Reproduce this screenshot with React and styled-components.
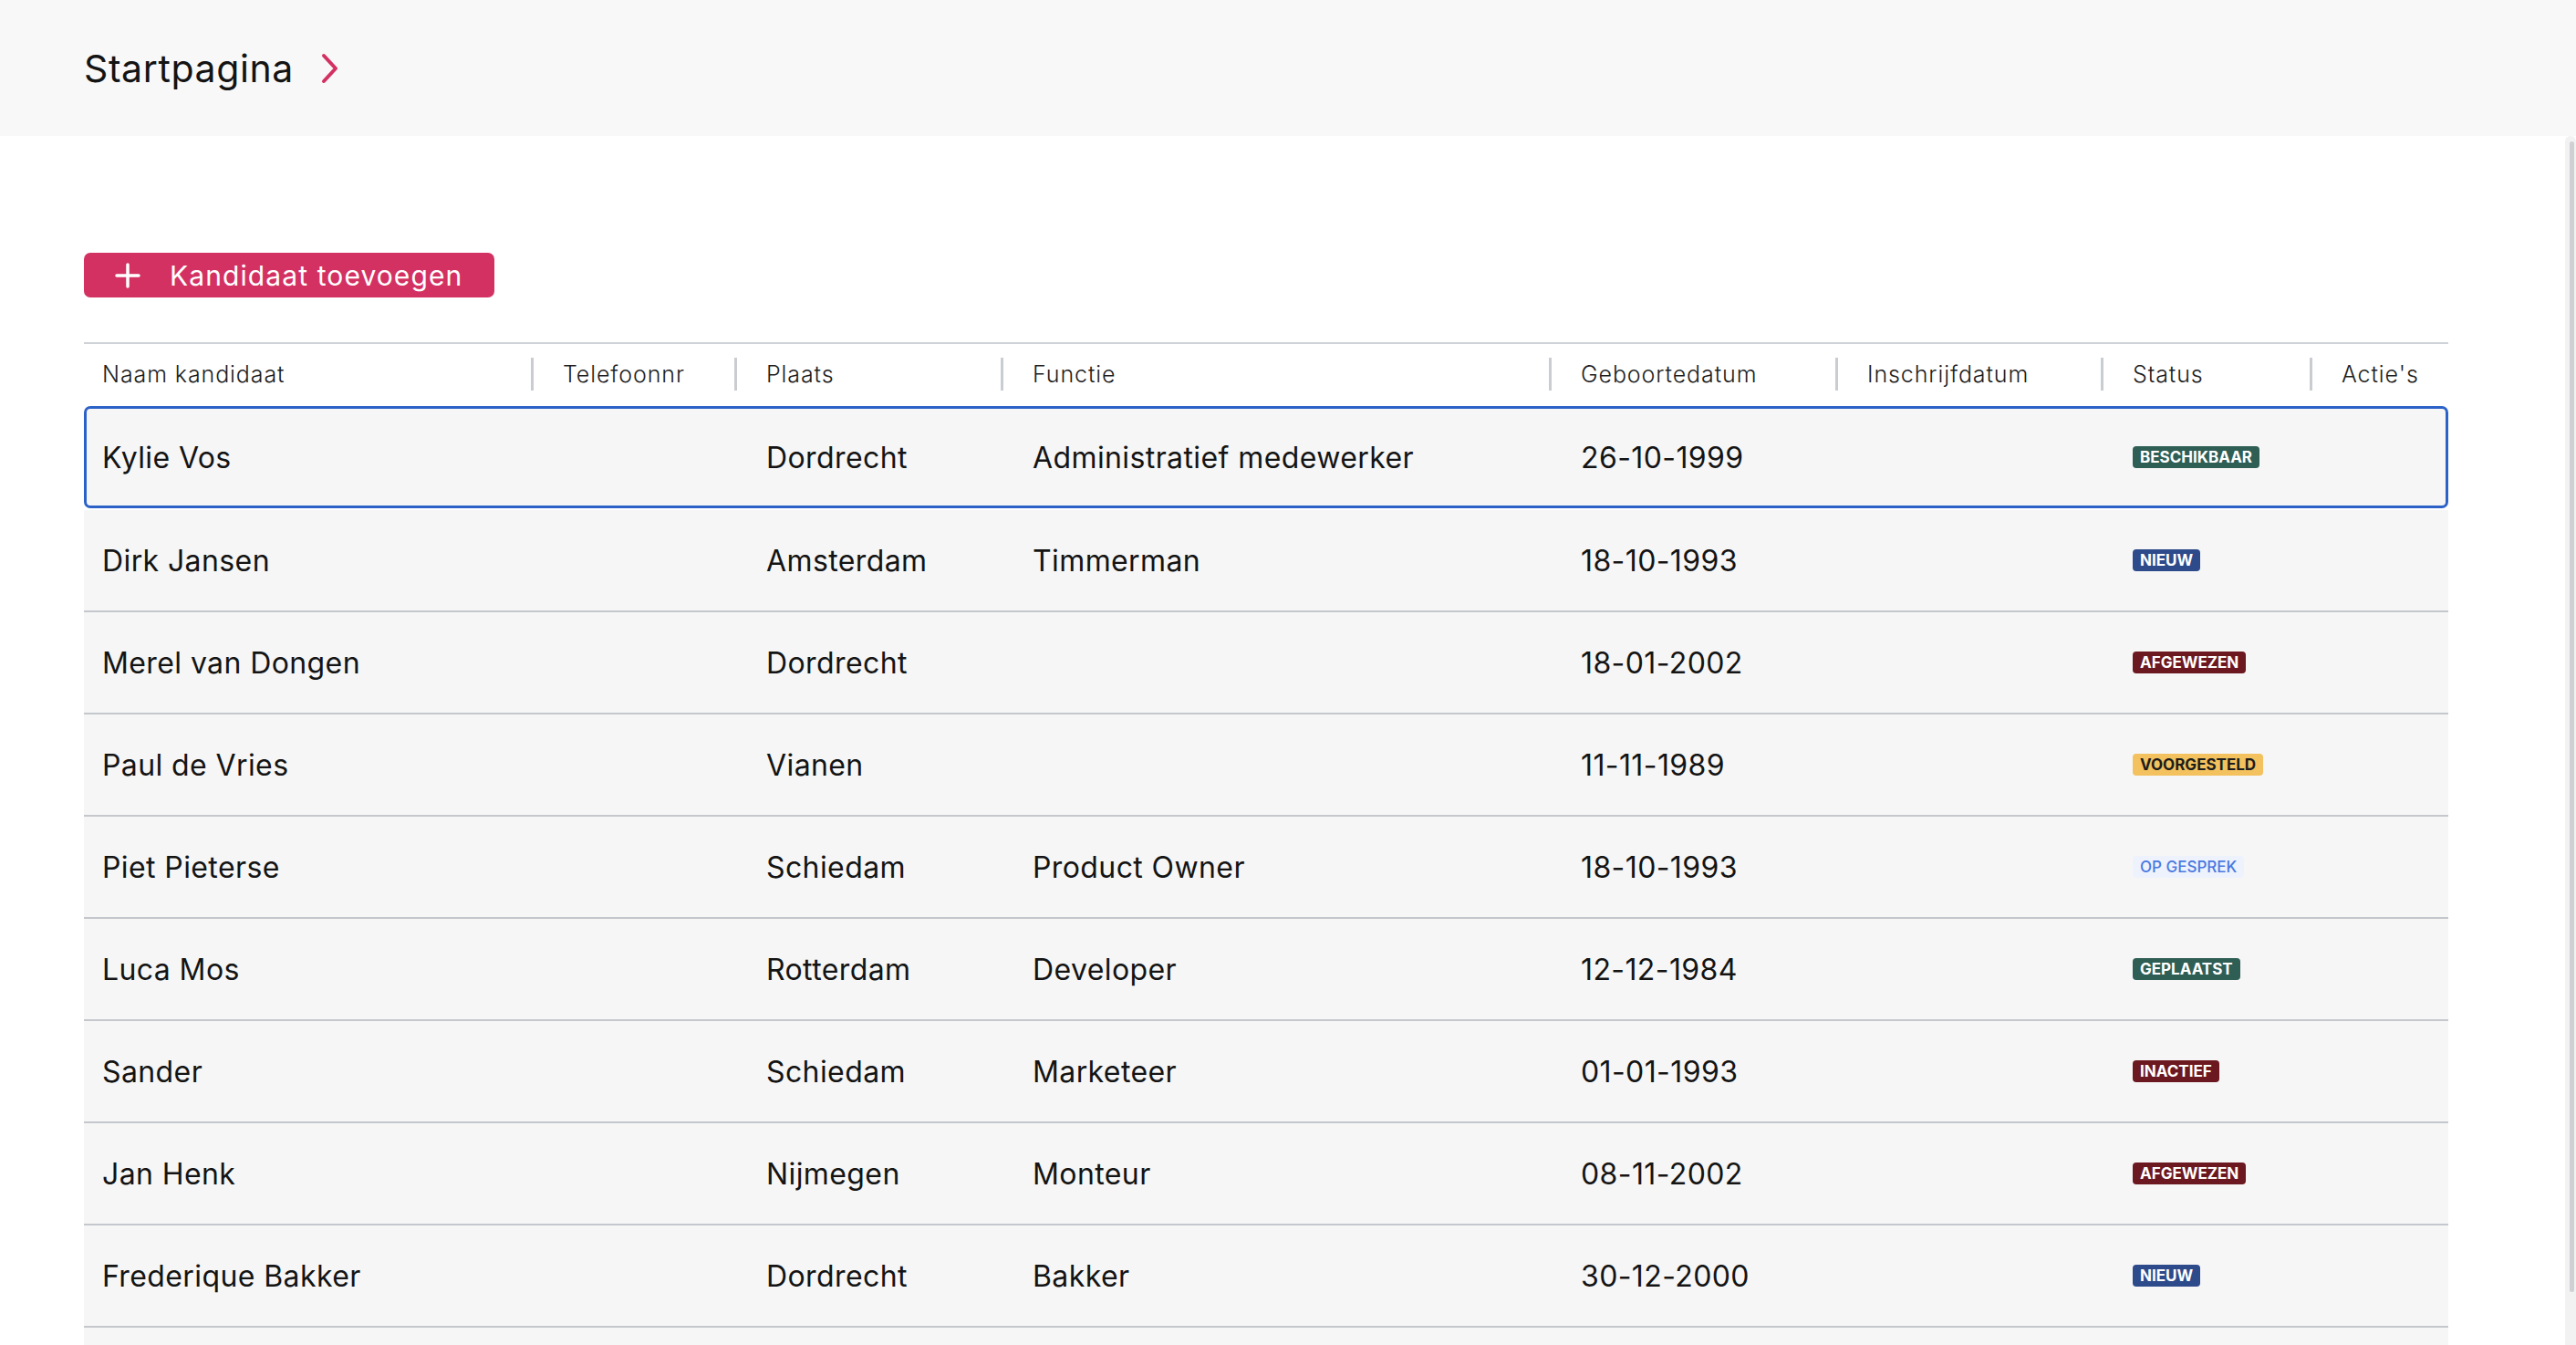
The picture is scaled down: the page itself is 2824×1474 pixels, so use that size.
import React from 'react';
import styled, { createGlobalStyle } from 'styled-components';

const GlobalStyle = createGlobalStyle`
  html, body, #root {
    height: 100%;
  }
  body {
    margin: 0;
    font-family: Inter, 'Noto Sans', sans-serif;
    color: #141414;
    background: #ffffff;
  }
  * {
    box-sizing: border-box;
  }
`;

const Page = styled.div`
  display: flex;
  flex-direction: column;
  height: 100vh;
  overflow: hidden;
`;

const TopBar = styled.header`
  flex: 0 0 149px;
  background: #f8f8f8;
  display: flex;
  align-items: center;
  gap: 30px;
  padding-left: 92px;
`;

const Title = styled.h1`
  margin: 0;
  font-size: 41px;
  font-weight: 400;
  letter-spacing: 0.6px;
  color: #141414;
`;

const Body = styled.div`
  flex: 1;
  min-height: 0;
  display: flex;
`;

const Main = styled.main`
  flex: 1;
  overflow: hidden;
  padding: 128px 128px 0 92px;
`;

const ScrollTrack = styled.div`
  flex: 0 0 12px;
  background: #f2f2f2;
  border-radius: 6px 6px 0 0;
  padding: 6px 2px 0 5px;
`;

const ScrollThumb = styled.div`
  height: 1261px;
  background: #cfd0d4;
  border-radius: 3px;
`;

const AddButton = styled.button`
  display: flex;
  align-items: center;
  gap: 32px;
  height: 49px;
  width: 450px;
  padding: 0 0 0 34px;
  border: none;
  border-radius: 7px;
  background: #d33162;
  color: #ffffff;
  font-family: inherit;
  font-size: 30px;
  font-weight: 400;
  letter-spacing: 1.1px;
  cursor: pointer;
`;

const Table = styled.div`
  margin-top: 49px;
  border-top: 2px solid #cfd2d6;
`;

const cols = '490px 223px 292px 601px 314px 291px 229px 1fr';

const HeaderRow = styled.div`
  display: grid;
  grid-template-columns: ${cols};
  align-items: center;
  height: 68px;
  padding-bottom: 2px;
`;

const HeadCell = styled.div`
  height: 36px;
  line-height: 36px;
  font-size: 25px;
  font-weight: 300;
  letter-spacing: 0.9px;
  color: #1e1e1e;
  padding-left: ${p => (p.$first ? '20px' : '32px')};
  border-left: ${p => (p.$first ? 'none' : '3px solid #c9ccd0')};
  white-space: nowrap;
`;

const Row = styled.div`
  display: grid;
  grid-template-columns: ${cols};
  align-items: center;
  height: 112px;
  background: #f6f6f6;
  border-bottom: ${p => (p.$selected ? 'none' : '2px solid #c4c7cc')};
  box-shadow: ${p => (p.$selected ? 'inset 0 0 0 3px #2c62c8' : 'none')};
  border-radius: ${p => (p.$selected ? '7px' : '0')};
  margin-bottom: ${p => (p.$selected ? '2px' : '0')};
`;

const Cell = styled.div`
  display: flex;
  align-items: center;
  font-size: 32px;
  font-weight: 400;
  letter-spacing: 0.4px;
  color: #141414;
  padding-left: ${p => (p.$first ? '20px' : '35px')};
  white-space: nowrap;
`;

const Badge = styled.span`
  display: inline-flex;
  align-items: center;
  height: 24px;
  padding: 0 8px;
  border-radius: 4px;
  font-size: 17px;
  font-weight: ${p => (p.$light ? 500 : 700)};
  letter-spacing: 0;
  text-transform: uppercase;
  background: ${p => p.$bg};
  color: ${p => p.$fg};
`;

const statusStyles = {
  beschikbaar: { bg: '#2f5e55', fg: '#ffffff' },
  nieuw: { bg: '#2d4a8b', fg: '#ffffff' },
  afgewezen: { bg: '#6c1820', fg: '#ffffff' },
  voorgesteld: { bg: '#f3c15d', fg: '#1c1c1c' },
  'op gesprek': { bg: '#edf2fd', fg: '#4a79e0', light: true },
  geplaatst: { bg: '#2f5e55', fg: '#ffffff' },
  inactief: { bg: '#6c1820', fg: '#ffffff' },
};

const headers = ['Naam kandidaat', 'Telefoonnr', 'Plaats', 'Functie', 'Geboortedatum', 'Inschrijfdatum', 'Status', "Actie's"];

const candidates = [
  { name: 'Kylie Vos', city: 'Dordrecht', role: 'Administratief medewerker', born: '26-10-1999', status: 'beschikbaar' },
  { name: 'Dirk Jansen', city: 'Amsterdam', role: 'Timmerman', born: '18-10-1993', status: 'nieuw' },
  { name: 'Merel van Dongen', city: 'Dordrecht', role: '', born: '18-01-2002', status: 'afgewezen' },
  { name: 'Paul de Vries', city: 'Vianen', role: '', born: '11-11-1989', status: 'voorgesteld' },
  { name: 'Piet Pieterse', city: 'Schiedam', role: 'Product Owner', born: '18-10-1993', status: 'op gesprek' },
  { name: 'Luca Mos', city: 'Rotterdam', role: 'Developer', born: '12-12-1984', status: 'geplaatst' },
  { name: 'Sander', city: 'Schiedam', role: 'Marketeer', born: '01-01-1993', status: 'inactief' },
  { name: 'Jan Henk', city: 'Nijmegen', role: 'Monteur', born: '08-11-2002', status: 'afgewezen' },
  { name: 'Frederique Bakker', city: 'Dordrecht', role: 'Bakker', born: '30-12-2000', status: 'nieuw' },
];

const Chevron = () => (
  <svg width="20" height="34" viewBox="0 0 20 34" fill="none">
    <path d="M3 3 L16 17 L3 31" stroke="#d33162" strokeWidth="4" strokeLinecap="round" strokeLinejoin="round" />
  </svg>
);

const PlusIcon = () => (
  <svg width="28" height="28" viewBox="0 0 28 28" fill="none">
    <path d="M14 2 V26 M2 14 H26" stroke="#ffffff" strokeWidth="3.5" strokeLinecap="round" />
  </svg>
);

const App = () => {
  return (
    <Page>
      <GlobalStyle />
      <TopBar>
        <Title>Startpagina</Title>
        <Chevron />
      </TopBar>
      <Body>
        <Main>
          <AddButton>
            <PlusIcon />
            Kandidaat toevoegen
          </AddButton>
          <Table>
            <HeaderRow>
              {headers.map((h, i) => (
                <HeadCell key={h} $first={i === 0}>{h}</HeadCell>
              ))}
            </HeaderRow>
            {candidates.map((c, i) => {
              const s = statusStyles[c.status];
              const selected = i === 0;
              return (
                <Row key={c.name} $selected={selected}>
                  <Cell $first>{c.name}</Cell>
                  <Cell />
                  <Cell>{c.city}</Cell>
                  <Cell>{c.role}</Cell>
                  <Cell>{c.born}</Cell>
                  <Cell />
                  <Cell>
                    <Badge $bg={s.bg} $fg={s.fg} $light={s.light}>{c.status}</Badge>
                  </Cell>
                  <Cell />
                </Row>
              );
            })}
            <Row />
          </Table>
        </Main>
        <ScrollTrack>
          <ScrollThumb />
        </ScrollTrack>
      </Body>
    </Page>
  );
};

export default App;
